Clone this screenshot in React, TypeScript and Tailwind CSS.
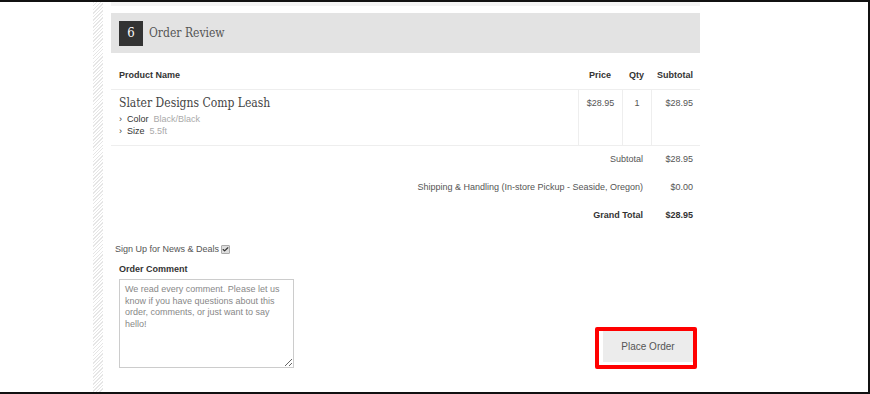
import { Check } from "lucide-react";

const sans = "font-['Liberation_Sans',Arial,sans-serif]";
const serif = "font-['DejaVu_Serif_Condensed','DejaVu_Serif',serif]";

const totals = [
  { label: "Subtotal", value: "$28.95", bold: false },
  { label: "Shipping & Handling (In-store Pickup - Seaside, Oregon)", value: "$0.00", bold: false },
  { label: "Grand Total", value: "$28.95", bold: true },
];

function OrderTable() {
  return (
    <div className="text-[9px] text-[#555]">
      <div className="grid h-[36px] grid-cols-[467px_44px_29px_49px] items-end pb-[8px] font-bold leading-[11px] text-[#333]">
        <div className="pl-[8px]">Product Name</div>
        <div className="text-center">Price</div>
        <div className="text-center">Qty</div>
        <div className="pr-[7px] text-right">Subtotal</div>
      </div>
      <div className="grid h-[57px] grid-cols-[467px_44px_29px_49px] border-y border-[#eee]">
        <div className="pl-[8px] pt-[5px]">
          <h3 className={`${serif} text-[12px] leading-[16px] text-[#444]`}>Slater Designs Comp Leash</h3>
          <div className="mt-[2px] leading-[12px]">
            <span className="text-[#333]">›&nbsp; Color</span>
            <span className="ml-[5px] text-[#aaa]">Black/Black</span>
          </div>
          <div className="leading-[12px]">
            <span className="text-[#333]">›&nbsp; Size</span>
            <span className="ml-[5px] text-[#aaa]">5.5ft</span>
          </div>
        </div>
        <div className="border-l border-[#eee] pt-[8px] text-center leading-[11px]">$28.95</div>
        <div className="border-l border-[#eee] pt-[8px] text-center leading-[11px]">1</div>
        <div className="border-l border-[#eee] pr-[7px] pt-[8px] text-right leading-[11px]">$28.95</div>
      </div>
      {totals.map((row) => (
        <div
          key={row.label}
          className={`grid h-[28px] grid-cols-[540px_49px] pt-[8px] leading-[11px] ${row.bold ? "font-bold text-[#333]" : ""}`}
        >
          <div className="pr-[8px] text-right">{row.label}</div>
          <div className="pr-[7px] text-right">{row.value}</div>
        </div>
      ))}
    </div>
  );
}

export default function App() {
  return (
    <div className={`${sans} flex h-[394px] w-[870px] border-y-2 border-r-2 border-[#111] bg-white`}>
      <div className="w-[93px] shrink-0" />
      <div className="w-[10px] shrink-0 bg-[image:repeating-linear-gradient(135deg,#e6e6e6_0px,#e6e6e6_1px,#fff_1px,#fff_2.5px)]" />
      <div className="w-[8px] shrink-0" />
      <main className="flex w-[589px] shrink-0 flex-col">
        <div className="h-[4px] bg-[#f4f4f4]" />
        <div className="mt-[7px] flex h-[40px] items-center bg-[#e3e3e3] pl-[8px]">
          <span className={`${serif} flex h-[25px] w-[24px] items-center justify-center bg-[#333] text-[13px] text-white`}>6</span>
          <h2 className={`${serif} ml-[6px] text-[12px] text-[#555]`}>Order Review</h2>
        </div>
        <OrderTable />
        <div className="flex items-end justify-between">
          <div className="mt-[14px] text-[9px] leading-[11px]">
            <label className="flex items-center pl-[4px] text-[#555]">
              Sign Up for News &amp; Deals
              <span className="ml-[2px] flex h-[9px] w-[9px] items-center justify-center rounded-[1px] border border-[#aaa] bg-[#ddd]">
                <Check className="h-[7px] w-[7px] text-[#333]" strokeWidth={4} />
              </span>
            </label>
            <div className="mt-[9px] pl-[8px] font-bold text-[#333]">Order Comment</div>
            <div className="ml-[8px] mt-[4px]">
              <textarea
                className="block h-[89px] w-[175px] resize border border-[#ccc] bg-white px-[5px] py-[4px] text-[9px] leading-[11.5px] text-[#555] outline-none placeholder:text-[#888]"
                placeholder={"We read every comment. Please let us\nknow if you have questions about this\norder, comments, or just want to say\nhello!"}
              />
            </div>
          </div>
          <div className="mb-[-1px] mr-[3px] rounded-[2px] border-4 border-[#ff0000] pb-[3px] pl-[4px]">
            <button className="flex h-[31px] w-[90px] items-center justify-center bg-[#ececec] text-[10px] text-[#555]">
              Place Order
            </button>
          </div>
        </div>
      </main>
    </div>
  );
}
